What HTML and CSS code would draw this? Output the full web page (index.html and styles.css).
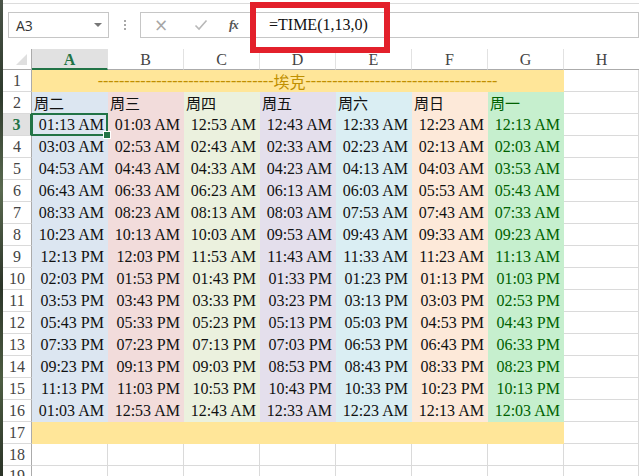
FILE: index.html
```html
<!DOCTYPE html>
<html>
<head>
<meta charset="utf-8">
<link rel="stylesheet" href="styles.css">
</head>
<body>
<div class="app">
  <div class="edge"></div>
  <div class="main">
    <div class="topline"></div>
    <div class="fbar">
      <div class="namebox"><span class="ref">A3</span><span class="drop"></span></div>
      <div class="dots"><i></i><i></i><i></i></div>
      <div class="btns">
        <span class="bx">×</span>
        <svg class="bchk" width="14" height="12" viewBox="0 0 14 12"><path d="M1.5 6.5 L5 10 L12.5 1.5" fill="none" stroke="#b8b8b8" stroke-width="1.6"/></svg>
        <span class="bfx">fx</span>
      </div>
      <div class="formula">=TIME(1,13,0)</div>
      <div class="redbox"></div>
    </div>
    <div class="sheet">
      <div class="corner"><span class="tri"></span></div>
      <div class="ch chsel">A</div><div class="ch">B</div><div class="ch">C</div><div class="ch">D</div><div class="ch">E</div><div class="ch">F</div><div class="ch">G</div><div class="ch chlast">H</div>

      <div class="rh">1</div><div class="c y title"><span class="dash">---------------------------------</span><span class="tk">埃克</span><span class="dash">------------------------------------</span></div><div class="c"></div>

      <div class="rh">2</div><div class="c ca wk">周二</div><div class="c cb wk">周三</div><div class="c cc wk">周四</div><div class="c cd wk">周五</div><div class="c ce wk">周六</div><div class="c cf wk">周日</div><div class="c cg wk">周一</div><div class="c"></div>

      <div class="rh rhsel">3</div><div class="c ca t sel">01:13 AM</div><div class="c cb t">01:03 AM</div><div class="c cc t">12:53 AM</div><div class="c cd t">12:43 AM</div><div class="c ce t">12:33 AM</div><div class="c cf t">12:23 AM</div><div class="c cg t">12:13 AM</div><div class="c"></div>

      <div class="rh">4</div><div class="c ca t">03:03 AM</div><div class="c cb t">02:53 AM</div><div class="c cc t">02:43 AM</div><div class="c cd t">02:33 AM</div><div class="c ce t">02:23 AM</div><div class="c cf t">02:13 AM</div><div class="c cg t">02:03 AM</div><div class="c"></div>

      <div class="rh">5</div><div class="c ca t">04:53 AM</div><div class="c cb t">04:43 AM</div><div class="c cc t">04:33 AM</div><div class="c cd t">04:23 AM</div><div class="c ce t">04:13 AM</div><div class="c cf t">04:03 AM</div><div class="c cg t">03:53 AM</div><div class="c"></div>

      <div class="rh">6</div><div class="c ca t">06:43 AM</div><div class="c cb t">06:33 AM</div><div class="c cc t">06:23 AM</div><div class="c cd t">06:13 AM</div><div class="c ce t">06:03 AM</div><div class="c cf t">05:53 AM</div><div class="c cg t">05:43 AM</div><div class="c"></div>

      <div class="rh">7</div><div class="c ca t">08:33 AM</div><div class="c cb t">08:23 AM</div><div class="c cc t">08:13 AM</div><div class="c cd t">08:03 AM</div><div class="c ce t">07:53 AM</div><div class="c cf t">07:43 AM</div><div class="c cg t">07:33 AM</div><div class="c"></div>

      <div class="rh">8</div><div class="c ca t">10:23 AM</div><div class="c cb t">10:13 AM</div><div class="c cc t">10:03 AM</div><div class="c cd t">09:53 AM</div><div class="c ce t">09:43 AM</div><div class="c cf t">09:33 AM</div><div class="c cg t">09:23 AM</div><div class="c"></div>

      <div class="rh">9</div><div class="c ca t">12:13 PM</div><div class="c cb t">12:03 PM</div><div class="c cc t">11:53 AM</div><div class="c cd t">11:43 AM</div><div class="c ce t">11:33 AM</div><div class="c cf t">11:23 AM</div><div class="c cg t">11:13 AM</div><div class="c"></div>

      <div class="rh">10</div><div class="c ca t">02:03 PM</div><div class="c cb t">01:53 PM</div><div class="c cc t">01:43 PM</div><div class="c cd t">01:33 PM</div><div class="c ce t">01:23 PM</div><div class="c cf t">01:13 PM</div><div class="c cg t">01:03 PM</div><div class="c"></div>

      <div class="rh">11</div><div class="c ca t">03:53 PM</div><div class="c cb t">03:43 PM</div><div class="c cc t">03:33 PM</div><div class="c cd t">03:23 PM</div><div class="c ce t">03:13 PM</div><div class="c cf t">03:03 PM</div><div class="c cg t">02:53 PM</div><div class="c"></div>

      <div class="rh">12</div><div class="c ca t">05:43 PM</div><div class="c cb t">05:33 PM</div><div class="c cc t">05:23 PM</div><div class="c cd t">05:13 PM</div><div class="c ce t">05:03 PM</div><div class="c cf t">04:53 PM</div><div class="c cg t">04:43 PM</div><div class="c"></div>

      <div class="rh">13</div><div class="c ca t">07:33 PM</div><div class="c cb t">07:23 PM</div><div class="c cc t">07:13 PM</div><div class="c cd t">07:03 PM</div><div class="c ce t">06:53 PM</div><div class="c cf t">06:43 PM</div><div class="c cg t">06:33 PM</div><div class="c"></div>

      <div class="rh">14</div><div class="c ca t">09:23 PM</div><div class="c cb t">09:13 PM</div><div class="c cc t">09:03 PM</div><div class="c cd t">08:53 PM</div><div class="c ce t">08:43 PM</div><div class="c cf t">08:33 PM</div><div class="c cg t">08:23 PM</div><div class="c"></div>

      <div class="rh">15</div><div class="c ca t">11:13 PM</div><div class="c cb t">11:03 PM</div><div class="c cc t">10:53 PM</div><div class="c cd t">10:43 PM</div><div class="c ce t">10:33 PM</div><div class="c cf t">10:23 PM</div><div class="c cg t">10:13 PM</div><div class="c"></div>

      <div class="rh">16</div><div class="c ca t">01:03 AM</div><div class="c cb t">12:53 AM</div><div class="c cc t">12:43 AM</div><div class="c cd t">12:33 AM</div><div class="c ce t">12:23 AM</div><div class="c cf t">12:13 AM</div><div class="c cg t">12:03 AM</div><div class="c"></div>

      <div class="rh">17</div><div class="c y span7"></div><div class="c"></div>

      <div class="rh">18</div><div class="c"></div><div class="c"></div><div class="c"></div><div class="c"></div><div class="c"></div><div class="c"></div><div class="c"></div><div class="c"></div>

      <div class="rh rhcut">19</div><div class="c"></div><div class="c"></div><div class="c"></div><div class="c"></div><div class="c"></div><div class="c"></div><div class="c"></div><div class="c"></div>
    </div>
  </div>
</div>
</body>
</html>
```

FILE: styles.css
```css
* { box-sizing: border-box; }
html, body { margin: 0; padding: 0; background: #fff; overflow: hidden; }
body { width: 639px; height: 476px; }

.app { display: flex; height: 476px; }
.edge {
  width: 3px; flex: none;
  background: linear-gradient(180deg, #4a5448 0%, #2e3a2c 20%, #5a6a50 40%, #2c3529 60%, #4d5d42 80%, #2a3327 100%);
}
.main { flex: 1; position: relative; overflow: hidden; }

.topline { height: 3px; border-bottom: 1px solid #dcdcdc; margin-top: 1px; }

.fbar { display: flex; align-items: stretch; height: 26px; margin-top: 8px; margin-bottom: 11px; position: relative; }
.namebox {
  width: 101px; margin-left: 5px; border: 1px solid #c6c6c6; display: flex; align-items: center;
  justify-content: space-between; padding: 0 6px 0 7px;
  font-family: "Open Sans", "Liberation Sans", sans-serif; font-size: 14px; color: #333;
}
.drop { width: 0; height: 0; border-left: 4px solid transparent; border-right: 4px solid transparent; border-top: 4px solid #777; }
.dots { width: 31px; display: flex; flex-direction: column; align-items: center; justify-content: center; gap: 2px; }
.dots i { display: block; width: 2px; height: 2px; background: #a8a8a8; }
.btns {
  width: 111px; border: 1px solid #c6c6c6; border-right: none; display: flex; align-items: center;
  padding-left: 13px; gap: 0;
}
.bx { font-family: "DejaVu Sans", sans-serif; font-size: 17px; color: #a6a6a6; width: 40px; line-height: 1; }
.bchk { margin-right: 21px; }
.bfx { font-family: "Liberation Serif", serif; font-style: italic; font-weight: bold; font-size: 13px; color: #555; letter-spacing: -1px; }
.formula {
  flex: 1; border: 1px solid #c6c6c6; display: flex; align-items: center; padding-left: 17px;
  font-family: "Liberation Serif", serif; font-size: 16px; color: #111;
}
.redbox {
  position: absolute; left: 247px; top: -10px; width: 140px; height: 51px;
  border: 6px solid #e3202b;
}

.sheet {
  display: grid;
  grid-template-columns: 29px repeat(7, 76px) 1fr;
  grid-template-rows: 21px;
  grid-auto-rows: 22px;
  font-family: "Liberation Serif", serif;
}
.corner { border-right: 1px solid #ababab; border-bottom: 1px solid #ababab; position: relative; display: flex; align-items: flex-end; justify-content: flex-end; padding: 0 4px 4px 0; }
.tri { width: 0; height: 0; border-left: 11px solid transparent; border-bottom: 11px solid #dfdfdf; }
.ch {
  border-right: 1px solid #e2e2e2; border-bottom: 1px solid #ababab;
  text-align: center; font-size: 16px; line-height: 21px; color: #444;
}
.chsel { background: #e1e1e1; color: #217346; font-weight: bold; border-bottom: 2px solid #217346; }
.chlast { border-right: none; }
.rh {
  border-right: 1px solid #ababab; border-bottom: 1px solid #dadada;
  text-align: center; font-size: 16px; line-height: 21px; color: #444;
}
.rhcut { line-height: 19px; }
.rhsel { background: #e1e1e1; color: #217346; font-weight: bold; border-right: 2px solid #217346; }

.c {
  border-right: 1px solid #dadada; border-bottom: 1px solid #dadada;
  font-size: 16px; line-height: 21px; color: #111; white-space: nowrap;
}
.t { text-align: right; padding-right: 3px; }
.wk { font-family: "Noto Sans CJK TC", sans-serif; font-size: 15px; line-height: 21px; padding-left: 2px; }
.y { background: #ffe699; border-color: transparent; grid-column: span 7; }
.title {
  display: flex; justify-content: center; align-items: center;
  color: #bf8f00; font-family: "Liberation Serif", serif; font-size: 16px;
}
.tk { font-family: "Noto Sans CJK TC", sans-serif; font-size: 16px; line-height: 20px; }
.dash { font-family: "Liberation Serif", serif; font-size: 16px; line-height: 20px; }
.ca { background: #dce6f1; border-color: transparent; }
.cb { background: #f2dcdb; border-color: transparent; }
.cc { background: #ebf1de; border-color: transparent; }
.cd { background: #e4dfec; border-color: transparent; }
.ce { background: #daeef3; border-color: transparent; }
.cf { background: #fde9d9; border-color: transparent; }
.cg { background: #c6efce; border-color: transparent; color: #006100; }

.sel { position: relative; }
.sel::after {
  content: ""; position: absolute; left: -1px; top: -1px; right: -1px; bottom: -1px;
  border: 2px solid #217346;
}
.sel::before {
  content: ""; position: absolute; right: -4px; bottom: -4px; width: 6px; height: 6px;
  background: #217346; border: 1px solid #fff; z-index: 2;
}
```
